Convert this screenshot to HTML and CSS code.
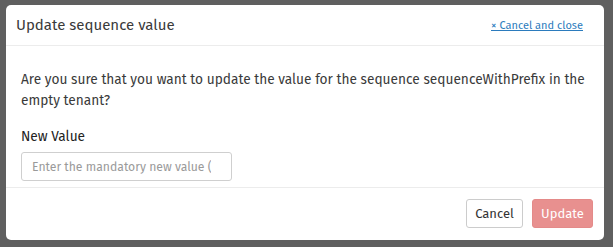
FILE: index.html
```html
<!DOCTYPE html>
<html>
<head>
    <link rel="stylesheet" href="styles.css">
    <title>Update sequence value</title>
</head>
<body>
<div class="overlay">
    <div class="modal">
        <div class="modal-header">
            <h2 class="modal-title">Update sequence value</h2>
            <a class="close-link" href="#">&times; Cancel and close</a>
        </div>
        <div class="modal-body">
            <p class="question">Are you sure that you want to update the value for the sequence sequenceWithPrefix in the empty tenant?</p>
            <label class="field-label" for="new-value">New Value</label>
            <input id="new-value" class="field-input" type="text" placeholder="Enter the mandatory new value (numeric)">
        </div>
        <div class="modal-footer">
            <button class="btn btn-cancel">Cancel</button>
            <button class="btn btn-update" disabled>Update</button>
        </div>
    </div>
</div>
</body>
</html>
```

FILE: styles.css
```css
body, html {
    margin: 0;
    padding: 0;
    height: 100%;
    font-family: "Fira Sans", Roboto, "Liberation Sans", sans-serif;
    color: #333;
}

.overlay {
    height: 100%;
    background-color: #5f5f5f;
    padding: 5px 9px 0 6px;
    box-sizing: border-box;
}

.modal {
    width: 598px;
    height: 235px;
    background-color: white;
    border-radius: 5px;
    display: flex;
    flex-direction: column;
}

.modal-header {
    height: 40px;
    display: flex;
    align-items: center;
    justify-content: space-between;
    padding: 0 21px 0 10px;
    border-bottom: 1px solid #ececec;
}

.modal-title {
    margin: 0;
    font-size: 15px;
    font-weight: normal;
    color: #3a3a3a;
}

.close-link {
    font-size: 11px;
    color: #2b7bbd;
    text-decoration: underline;
}

.modal-body {
    padding: 23px 15px 6px 15px;
    display: flex;
    flex-direction: column;
    align-items: flex-start;
    border-bottom: 1px solid #ececec;
}

.question {
    margin: 0 0 16px 0;
    font-size: 13.7px;
    line-height: 21px;
    color: #3a3a3a;
}

.field-label {
    font-size: 13.7px;
    line-height: 20px;
    font-weight: normal;
    color: #222;
    margin-bottom: 5px;
}

.field-input {
    width: 211px;
    height: 29px;
    box-sizing: border-box;
    border: 1px solid #cfcfcf;
    border-radius: 3px;
    padding: 0 20px 0 10px;
    font-family: inherit;
    font-size: 12.2px;
    color: #333;
}

.field-input::placeholder {
    color: #9a9a9a;
}

.modal-footer {
    flex: 1;
    display: flex;
    justify-content: flex-end;
    align-items: flex-start;
    gap: 9px;
    padding: 11px 11px 0 0;
}

.btn {
    height: 29px;
    border-radius: 3px;
    font-family: inherit;
    font-size: 13px;
    padding: 0;
    cursor: pointer;
}

.btn-cancel {
    background: white;
    border: 1px solid #cccccc;
    color: #333;
    width: 57px;
}

.btn-update {
    background: #e8908f;
    border: 1px solid #e48a89;
    color: white;
    width: 61px;
}
```
